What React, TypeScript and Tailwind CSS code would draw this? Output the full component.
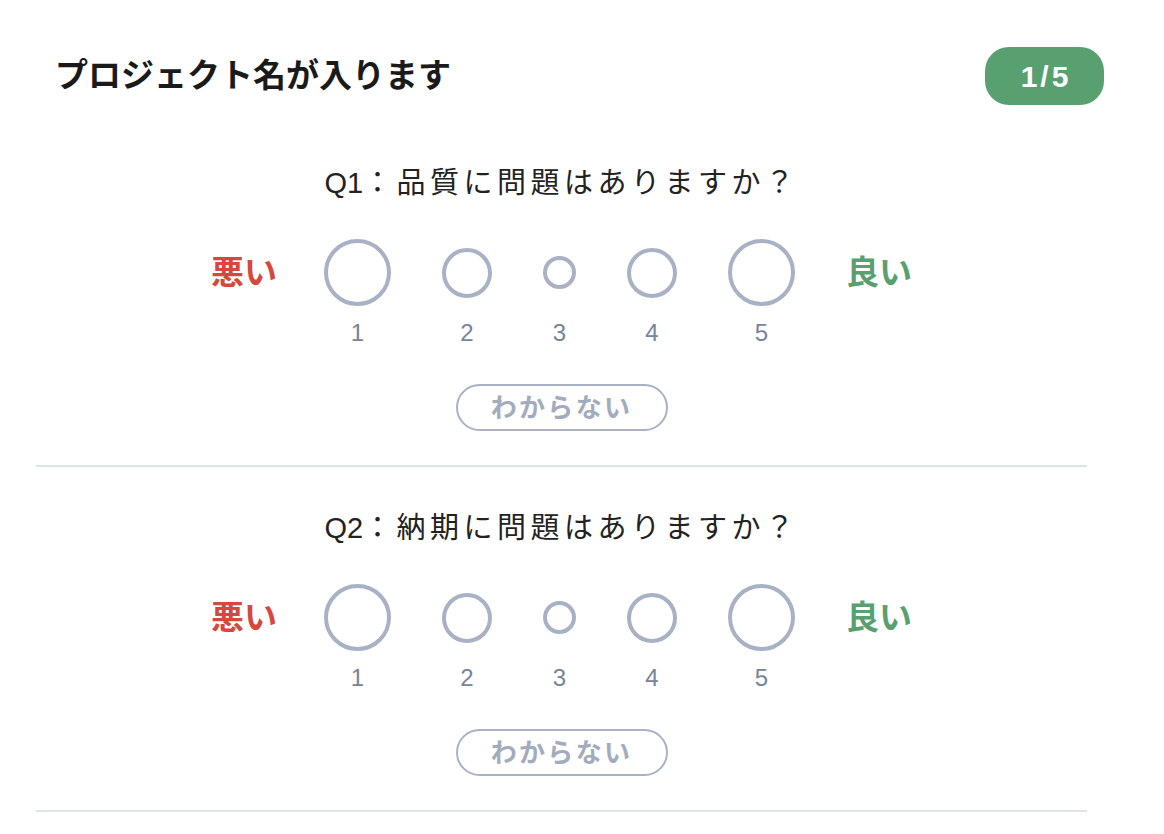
import React from 'react';

const SIZES = [67, 50, 33, 50, 67];

const sizeClass: Record<number, string> = {
  67: 'h-[67px] w-[67px]',
  50: 'h-[50px] w-[50px]',
  33: 'h-[33px] w-[33px]',
};

function Question({ no, label }: { no: string; label: string }) {
  return (
    <section className="flex flex-col items-center">
      <h2 className="text-[29px] leading-[40px] text-[#222]">
        <span>{no}</span>
        <span className="tracking-[4.5px]">{label}</span>
      </h2>

      {/* 5 point scale */}
      <div className="mt-[36px] flex items-start justify-center">
        <div className="flex h-[67px] items-center text-[33px] font-bold text-[#d4483e]">悪い</div>
        <div className="ml-[47px] flex items-start gap-[51px]">
          {SIZES.map((s, i) => (
            <div key={i} className="flex flex-col items-center">
              <div className="flex h-[67px] items-center">
                <button className={`${sizeClass[s]} rounded-full border-4 border-[#a8b2c4] bg-white`} />
              </div>
              <span className="mt-[11px] text-[24px] leading-[32px] text-[#76849a]">{i + 1}</span>
            </div>
          ))}
        </div>
        <div className="ml-[51px] flex h-[67px] items-center text-[33px] font-bold text-[#58a06f]">良い</div>
      </div>

      <button className="mt-[35px] flex h-[47px] w-[212px] items-center justify-center rounded-full border-2 border-[#a8b2c4] pt-[2px] text-[26px] font-bold tracking-[0.09em] text-[#a2acbd]">
        わからない
      </button>
    </section>
  );
}

export default function App() {
  return (
    <div
      className="h-[834px] w-[1164px] overflow-hidden bg-white"
      style={{ fontFamily: '"Liberation Sans", "Noto Sans CJK JP", sans-serif' }}
    >
      <header className="mt-[47px] flex h-[58px] items-center justify-between pl-[55px] pr-[60px]">
        <h1 className="text-[33px] font-bold text-[#1a1a1a]">プロジェクト名が入ります</h1>
        <div className="flex h-[58px] w-[119px] items-center justify-center rounded-[24px] bg-[#58a06f] pl-[3px] text-[30px] font-bold tracking-[0.1em] text-white">
          1/5
        </div>
      </header>

      <div className="ml-[36px] mt-[58px] w-[1051px]">
        <Question no="Q1" label="：品質に問題はありますか？" />
        <div className="mt-[34px] h-[2px] bg-[#dde3ea]" />
        <div className="mt-[41px]">
          <Question no="Q2" label="：納期に問題はありますか？" />
        </div>
        <div className="mt-[34px] h-[2px] bg-[#dde3ea]" />
      </div>
    </div>
  );
}
